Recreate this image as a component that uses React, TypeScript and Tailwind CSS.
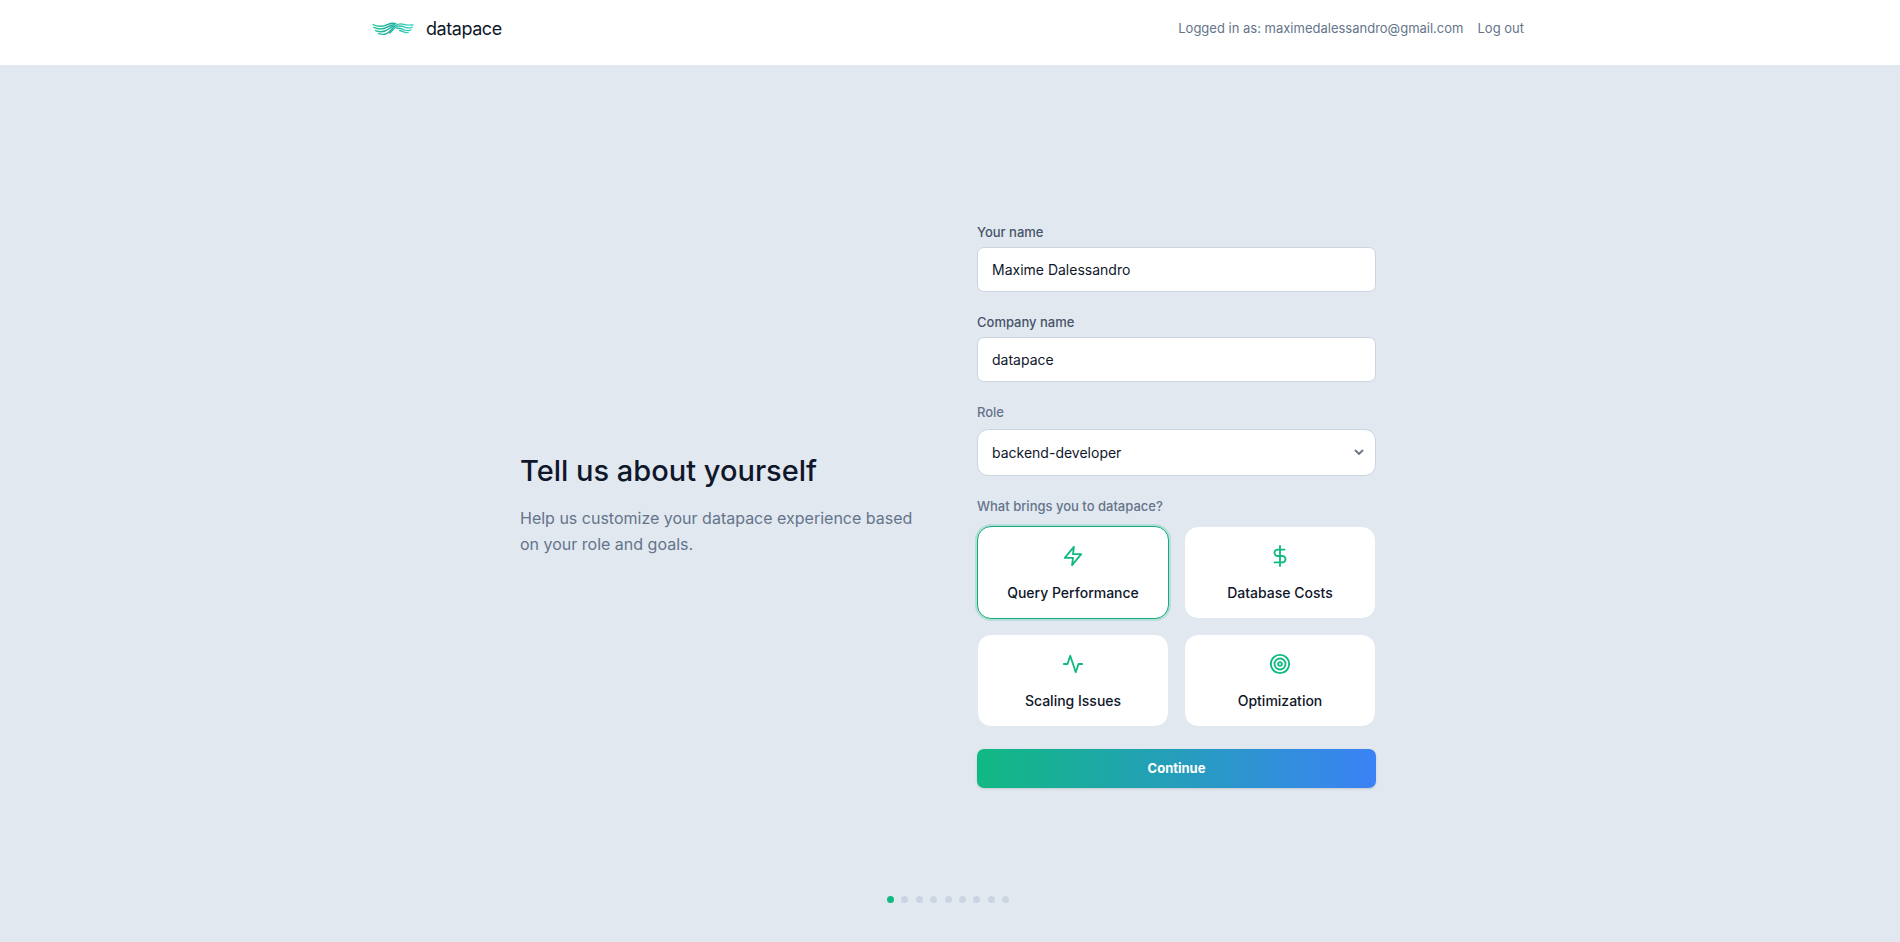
import React, { useState } from 'react';
import { FiActivity, FiDollarSign, FiTarget, FiZap } from 'react-icons/fi';

const goals = [
  { id: 'performance', label: 'Query Performance', icon: FiZap },
  { id: 'costs', label: 'Database Costs', icon: FiDollarSign },
  { id: 'scaling', label: 'Scaling Issues', icon: FiActivity },
  { id: 'optimization', label: 'Optimization', icon: FiTarget },
];

const steps = [1, 2, 3, 4, 5, 6, 7, 8, 9];

const Logo = () => (
  <svg viewBox="0 0 123 39" className="h-[14px] w-[42px]" fill="none" strokeLinecap="round" aria-hidden="true">
    <defs>
      <linearGradient id="wave" x1="0" y1="0" x2="123" y2="0" gradientUnits="userSpaceOnUse">
        <stop offset="0" stopColor="#2fcf9a" />
        <stop offset="0.4" stopColor="#16ab98" />
        <stop offset="1" stopColor="#3fdcc8" />
      </linearGradient>
    </defs>
    <g stroke="url(#wave)" strokeWidth="4">
      <path d="M3 7C18 14 34 12 47 6C54 3 64 2 70 4" />
      <path d="M5 15C20 22 36 20 49 12C56 8 60 7 66 7" />
      <path d="M10 24C24 30 38 28 51 18C56 14 59 12 63 11" />
      <path d="M19 33C38 39 46 33 56 22C66 9 76 3 88 5C100 8 110 10 120 7" />
      <path d="M52 31C60 24 66 14 76 11C86 9 92 13 98 15C106 17 112 17 118 14" />
      <path d="M73 18C82 15 90 21 96 23C104 25 109 25 114 22" />
      <path d="M81 24C88 25 94 31 106 30" />
    </g>
  </svg>
);

const App = () => {
  const [name, setName] = useState('Maxime Dalessandro');
  const [company, setCompany] = useState('datapace');
  const [role, setRole] = useState('backend-developer');
  const [goal, setGoal] = useState('performance');

  return (
    <div className="flex min-h-screen flex-col bg-[#e2e8f0] font-[Inter,sans-serif] text-[#0f172a]">
      <header className="bg-white pr-1">
        <div className="mx-auto flex h-[65px] max-w-6xl items-center justify-between pb-2">
          <a href="#" className="flex items-center gap-3">
            <Logo />
            <span className="text-lg tracking-tight">datapace</span>
          </a>
          <div className="flex items-center gap-[14px] text-[13px] text-[#64748b]">
            <span>Logged in as: maximedalessandro@gmail.com</span>
            <a href="#" className="hover:text-slate-900">Log out</a>
          </div>
        </div>
      </header>

      <main className="flex flex-1 flex-col pr-1">
        <div className="mx-auto grid w-full max-w-[856px] flex-1 grid-cols-2 items-center gap-[58px] pt-[49px]">
          <section>
            <h1 className="mb-4 text-[29px] leading-9 font-medium">Tell us about yourself</h1>
            <p className="text-base leading-[26px] text-[#64748b]">
              Help us customize your datapace experience based on your role and goals.
            </p>
          </section>

          <form onSubmit={(e) => e.preventDefault()}>
            <div className="mb-5">
              <label htmlFor="name" className="mb-[5px] block text-[13px] leading-5 font-medium text-[#475569]">Your name</label>
              <input
                id="name"
                value={name}
                onChange={(e) => setName(e.target.value)}
                className="h-[45px] w-full rounded-[7px] border border-[#cbd5e1] bg-white px-[14px] text-sm"
              />
            </div>
            <div className="mb-5">
              <label htmlFor="company" className="mb-[5px] block text-[13px] leading-5 font-medium text-[#475569]">Company name</label>
              <input
                id="company"
                value={company}
                onChange={(e) => setCompany(e.target.value)}
                className="h-[45px] w-full rounded-[7px] border border-[#cbd5e1] bg-white px-[14px] text-sm"
              />
            </div>
            <div className="mb-5">
              <label htmlFor="role" className="mb-[7px] block text-[13px] leading-5 font-medium text-[#64748b]">Role</label>
              <div className="relative">
                <select
                  id="role"
                  value={role}
                  onChange={(e) => setRole(e.target.value)}
                  className="h-[47px] w-full appearance-none rounded-[11px] border border-[#cbd5e1] bg-white px-[14px] text-sm"
                >
                  <option value="backend-developer">backend-developer</option>
                </select>
                <svg viewBox="0 0 10 6" className="pointer-events-none absolute top-5 right-3 h-[6px] w-[10px]" fill="none" stroke="#6b7280" strokeWidth="1.8" aria-hidden="true">
                  <path d="M1 1l4 4 4-4" />
                </svg>
              </div>
            </div>
            <fieldset>
              <legend className="mb-[10px] text-[13px] leading-5 font-medium text-[#64748b]">What brings you to datapace?</legend>
              <div className="grid grid-cols-2 gap-[15px]">
                {goals.map(({ id, label, icon: Icon }) => (
                  <button
                    key={id}
                    type="button"
                    aria-pressed={goal === id}
                    onClick={() => setGoal(id)}
                    className={`flex h-[93px] flex-col items-center justify-center gap-[14px] rounded-[14px] border bg-white pt-1 text-sm leading-6 font-medium ${
                      goal === id ? 'border-[#10ac79] ring-2 ring-[#10b981]/20' : 'border-[#e2e8f0]'
                    }`}
                  >
                    <Icon className="size-[22px] text-[#10b981]" />
                    {label}
                  </button>
                ))}
              </div>
            </fieldset>
            <button
              type="submit"
              className="mt-[22px] h-[39px] w-full rounded-[7px] bg-linear-to-r/srgb from-[#10b981] to-[#3b82f6] text-[13px] font-bold text-white shadow-sm"
            >
              Continue
            </button>
          </form>
        </div>

        <div className="mx-auto mb-[39px] flex w-[122px] justify-between">
          {steps.map((step) => (
            <span key={step} className={`size-[7px] rounded-full ${step === 1 ? 'bg-[#10b981]' : 'bg-[#cbd5e1]'}`} />
          ))}
        </div>
      </main>
    </div>
  );
};

export default App;
